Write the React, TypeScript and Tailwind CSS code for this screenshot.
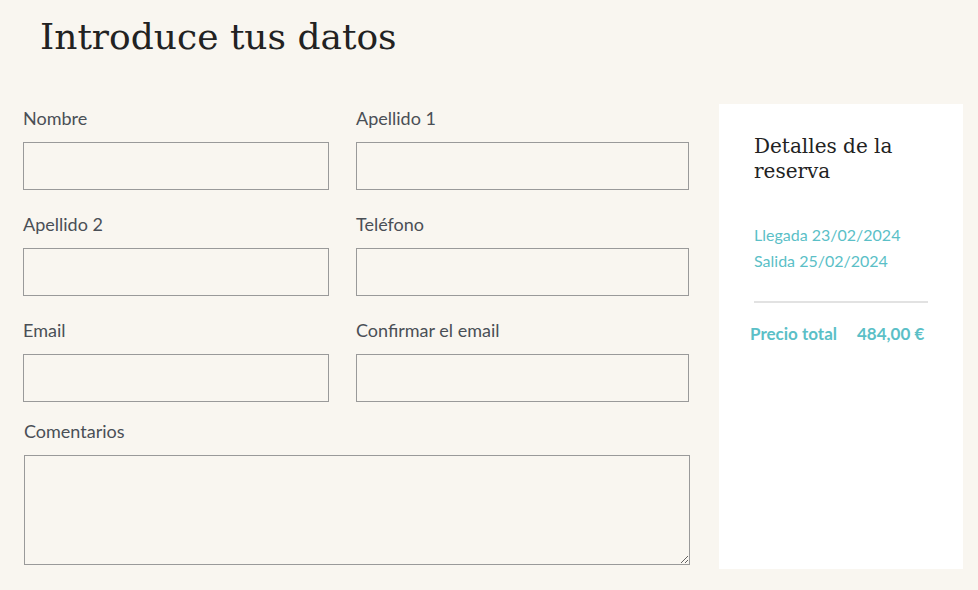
import React from "react";

const lato = { fontFamily: "Lato, 'Open Sans', sans-serif" } as const;
const serif = { fontFamily: "'DejaVu Serif', Georgia, serif" } as const;

function Field({ label }: { label: string }) {
  return (
    <div className="flex flex-col">
      <label className="text-[18px] leading-[22px] text-[#4a4f56] mb-[13px]" style={lato}>
        {label}
      </label>
      <input className="h-[48px] border border-[#9a9a9a] bg-transparent outline-none" />
    </div>
  );
}

export default function App() {
  return (
    <div className="w-[978px] h-[590px] bg-[#f9f6f0] overflow-hidden">
      <h1 className="pl-[40px] pt-[14px] text-[36px] leading-[46px] text-[#222]" style={serif}>
        Introduce tus datos
      </h1>
      <div className="flex mt-[44px]">
        <div className="pl-[23px] w-[690px]">
          <div className="grid grid-cols-[306px_333px] gap-x-[27px] gap-y-[23px] pt-[3px]">
            <Field label="Nombre" />
            <Field label="Apellido 1" />
            <Field label="Apellido 2" />
            <Field label="Teléfono" />
            <Field label="Email" />
            <Field label="Confirmar el email" />
          </div>
          <div className="flex flex-col mt-[18px] pl-[1px]">
            <label className="text-[18px] leading-[22px] text-[#4a4f56] mb-[13px]" style={lato}>
              Comentarios
            </label>
            <textarea className="h-[110px] w-[666px] border border-[#9a9a9a] bg-transparent outline-none" />
          </div>
        </div>
        <div className="ml-[29px] w-[244px] h-[465px] bg-white px-[35px] pt-[30px]">
          <h2 className="text-[20px] leading-[25px] text-[#222]" style={serif}>
            Detalles de la reserva
          </h2>
          <div className="mt-[38px] text-[16px] leading-[26px] text-[#5bbfc7]" style={lato}>
            <div>Llegada 23/02/2024</div>
            <div>Salida 25/02/2024</div>
          </div>
          <div className="mt-[27px] h-[2px] bg-[#e2e2e2]" />
          <div className="mt-[18px] -ml-[4px] flex gap-[20px] text-[17px] font-bold text-[#5bbfc7]" style={lato}>
            <span>Precio total</span>
            <span>484,00 €</span>
          </div>
        </div>
      </div>
    </div>
  );
}
